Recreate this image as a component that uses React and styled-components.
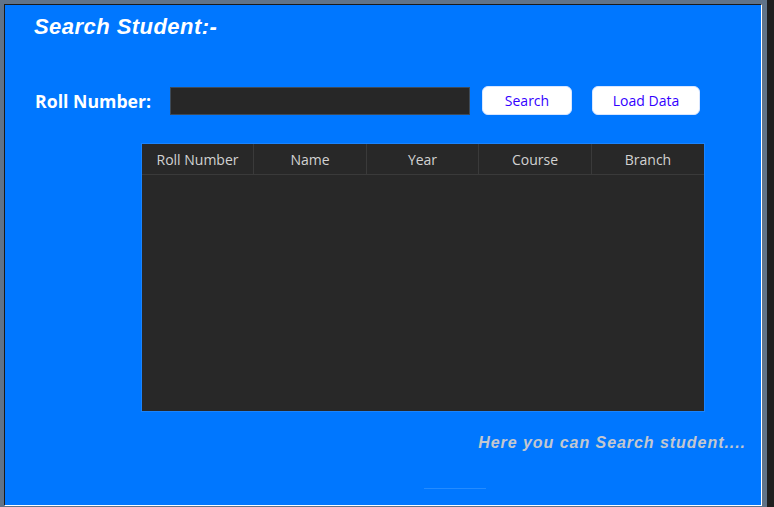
import React from "react";
import styled, { createGlobalStyle } from "styled-components";

const Global = createGlobalStyle`
  html, body { margin: 0; padding: 0; background: #1f1f1f; }
  body { width: 774px; height: 507px; overflow: hidden; }
`;

const Desktop = styled.div`
  width: 774px;
  height: 507px;
  background: #1f1f1f;
`;

const Frame = styled.div`
  width: 767px;
  height: 507px;
  box-sizing: border-box;
  background: #607388;
  padding: 4px 5px 0 4px;
`;

const Panel = styled.div`
  box-sizing: border-box;
  width: 758px;
  height: 502px;
  background: #0077ff;
  border-left: 1px solid #1b1b1b;
  border-top: 1px solid #1b1b1b;
  border-right: 1px solid #ffffff;
  border-bottom: 1px solid #ffffff;
  display: flex;
  flex-direction: column;
`;

const Title = styled.h1`
  margin: 9px 0 0 29px;
  font-family: "Liberation Sans", Arial, sans-serif;
  font-style: italic;
  font-weight: 700;
  font-size: 22px;
  line-height: 26px;
  letter-spacing: 0.45px;
  color: #ffffff;
`;

const SearchRow = styled.div`
  display: flex;
  align-items: center;
  margin: 46px 0 0 30px;
  height: 29px;
`;

const Label = styled.label`
  font-family: "Open Sans", "Noto Sans", sans-serif;
  font-weight: 700;
  font-size: 17.7px;
  color: #ffffff;
  width: 135px;
`;

const Input = styled.input`
  box-sizing: border-box;
  width: 300px;
  height: 28px;
  background: #272727;
  border: 1px solid #3d4a58;
  outline: none;
  color: #fff;
  margin-right: 12px;
`;

const Button = styled.button`
  box-sizing: border-box;
  width: ${(p) => p.$w}px;
  height: 29px;
  margin-right: ${(p) => p.$mr || 0}px;
  background: #ffffff;
  border: 1px solid #d8e6ff;
  border-radius: 6px;
  font-family: "Open Sans", "Noto Sans", sans-serif;
  font-size: 14px;
  color: #3300ff;
  padding: 0;
  cursor: pointer;
`;

const Table = styled.div`
  box-sizing: border-box;
  margin: 28px 0 0 136px;
  width: 564px;
  height: 269px;
  background: #282828;
  border: 1px solid #1a84ff;
  display: flex;
  flex-direction: column;
`;

const HeaderRow = styled.div`
  display: grid;
  grid-template-columns: 112px 113px 112px 113px 1fr;
  height: 30px;
  border-bottom: 1px solid #3a3a3a;
`;

const HeaderCell = styled.div`
  display: flex;
  align-items: center;
  justify-content: center;
  font-family: "Open Sans", "Noto Sans", sans-serif;
  font-size: 14px;
  color: #d2d2d2;
  border-right: ${(p) => (p.$last ? "none" : "1px solid #3a3a3a")};
`;

const Footer = styled.div`
  margin: 22px 15px 0 0;
  text-align: right;
  font-family: "Liberation Sans", Arial, sans-serif;
  font-style: italic;
  font-weight: 700;
  font-size: 16px;
  letter-spacing: 0.95px;
  color: #c3c7cf;
`;

const Hint = styled.div`
  margin: 36px 0 0 419px;
  width: 62px;
  height: 1px;
  background: #248bff;
`;

const columns = ["Roll Number", "Name", "Year", "Course", "Branch"];

export default function App() {
  return (
    <Desktop>
      <Global />
      <Frame>
        <Panel>
          <Title>Search Student:-</Title>
          <SearchRow>
            <Label>Roll Number:</Label>
            <Input />
            <Button $w={90} $mr={20}>Search</Button>
            <Button $w={108}>Load Data</Button>
          </SearchRow>
          <Table>
            <HeaderRow>
              {columns.map((c, i) => (
                <HeaderCell key={c} $last={i === columns.length - 1}>
                  {c}
                </HeaderCell>
              ))}
            </HeaderRow>
          </Table>
          <Footer>Here you can Search student....</Footer>
          <Hint />
        </Panel>
      </Frame>
    </Desktop>
  );
}
